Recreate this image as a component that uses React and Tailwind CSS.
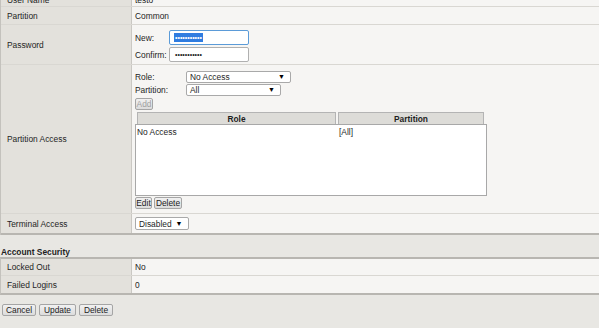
import React from "react";

const Row = ({ label, children, className = "", labelClass = "items-center" }) => (
  <div className={`flex border-b border-[#d9d7d2] ${className}`}>
    <div className={`w-[131px] shrink-0 bg-[#e3e1dc] border-r border-[#cac8c3] pl-[6px] flex ${labelClass}`}>
      {label}
    </div>
    <div className="flex-1 bg-[#f6f5f3] pl-[3px]">{children}</div>
  </div>
);

const Select = ({ value, className = "" }) => (
  <div
    className={`flex items-center justify-between gap-[4px] bg-white border border-[#a9a9a9] rounded-[2px] pl-[3px] pr-[5px] ${className}`}
  >
    <span>{value}</span>
    <span className="text-[7px] text-black">▼</span>
  </div>
);

const Button = ({ children, disabled, className = "" }) => (
  <div
    className={`flex items-center justify-center h-[12px] px-[2px] border border-[#a5a5a5] rounded-[2px] bg-gradient-to-b from-[#f1f1f1] to-[#dcdcdc] ${
      disabled ? "text-[#a0a0a0]" : "text-[#222]"
    } ${className}`}
  >
    {children}
  </div>
);

const App = () => {
  return (
    <div className="w-[599px] h-[328px] overflow-hidden bg-[#e8e7e3] font-['Liberation_Sans',Arial,sans-serif] text-[8.4px] leading-[10px] text-[#1e1e1e]">
      <div className="-mt-[12px] border-l border-[#c4c2bd]">
        <Row label="User Name" className="h-[19px]" labelClass="items-end pb-[1px]">
          <div className="h-full flex items-end pb-[1px]">testo</div>
        </Row>
        <Row label="Partition" className="h-[18px]">
          <div className="h-full flex items-center">Common</div>
        </Row>
        <Row label="Password" className="h-[40px]">
          <div className="pt-[5px] flex flex-col gap-[2px]">
            <div className="flex items-center">
              <span className="w-[34px]">New:</span>
              <div className="w-[80px] h-[15px] bg-white border border-[#5b9bd8] rounded-[2px] flex items-center pl-[4px]">
                <span className="bg-[#2f7ce0] text-white text-[7px] leading-[9px] px-[1px]">
                  •••••••••••
                </span>
              </div>
            </div>
            <div className="flex items-center">
              <span className="w-[34px]">Confirm:</span>
              <div className="w-[80px] h-[15px] bg-white border border-[#b0b0b0] rounded-[2px] flex items-center pl-[5px]">
                <span className="text-[7px] leading-[9px]">•••••••••••</span>
              </div>
            </div>
          </div>
        </Row>
        <Row label="Partition Access" className="h-[149px]">
          <div className="pt-[6px] flex flex-col">
            <div className="flex items-center h-[12px]">
              <span className="w-[51px]">Role:</span>
              <Select value="No Access" className="w-[105px] h-[12px]" />
            </div>
            <div className="flex items-center h-[12px] mt-[1px]">
              <span className="w-[51px]">Partition:</span>
              <Select value="All" className="w-[95px] h-[12px]" />
            </div>
            <div className="mt-[2px] flex">
              <Button disabled className="w-[18px]">
                Add
              </Button>
            </div>
            <div className="mt-[2px] flex gap-[2px] ml-[2px]">
              <div className="w-[199px] h-[12px] bg-[#dddcd8] border border-b-0 border-[#b4b4b4] flex items-center justify-center font-bold">
                Role
              </div>
              <div className="w-[146px] h-[12px] bg-[#dddcd8] border border-b-0 border-[#b4b4b4] flex items-center justify-center font-bold">
                Partition
              </div>
            </div>
            <div className="w-[352px] h-[72px] bg-white border border-[#a8a8a8]">
              <div className="flex pt-[2px]">
                <span className="w-[203px] pl-[1px]">No Access</span>
                <span>[All]</span>
              </div>
            </div>
            <div className="mt-[1px] flex gap-[2px]">
              <Button className="w-[17px]">Edit</Button>
              <Button className="w-[28px]">Delete</Button>
            </div>
          </div>
        </Row>
        <Row label="Terminal Access" className="h-[21px] border-b-2 border-b-[#b8b6b1]">
          <div className="pt-[3px] flex">
            <Select value="Disabled" className="h-[13px] pr-[4px]" />
          </div>
        </Row>
      </div>

      <div className="h-[22px] flex items-end pl-[1px] font-bold">Account Security</div>

      <div className="border-t-2 border-b-2 border-[#b8b6b1] border-l border-l-[#c4c2bd]">
        <Row label="Locked Out" className="h-[17px]">
          <div className="h-full flex items-center">No</div>
        </Row>
        <Row label="Failed Logins" className="h-[17px] border-b-0">
          <div className="h-full flex items-center">0</div>
        </Row>
      </div>

      <div className="mt-[9px] pl-[2px] flex gap-[3px]">
        <Button className="w-[34px]">Cancel</Button>
        <Button className="w-[37px]">Update</Button>
        <Button className="w-[34px]">Delete</Button>
      </div>
    </div>
  );
};

export default App;
